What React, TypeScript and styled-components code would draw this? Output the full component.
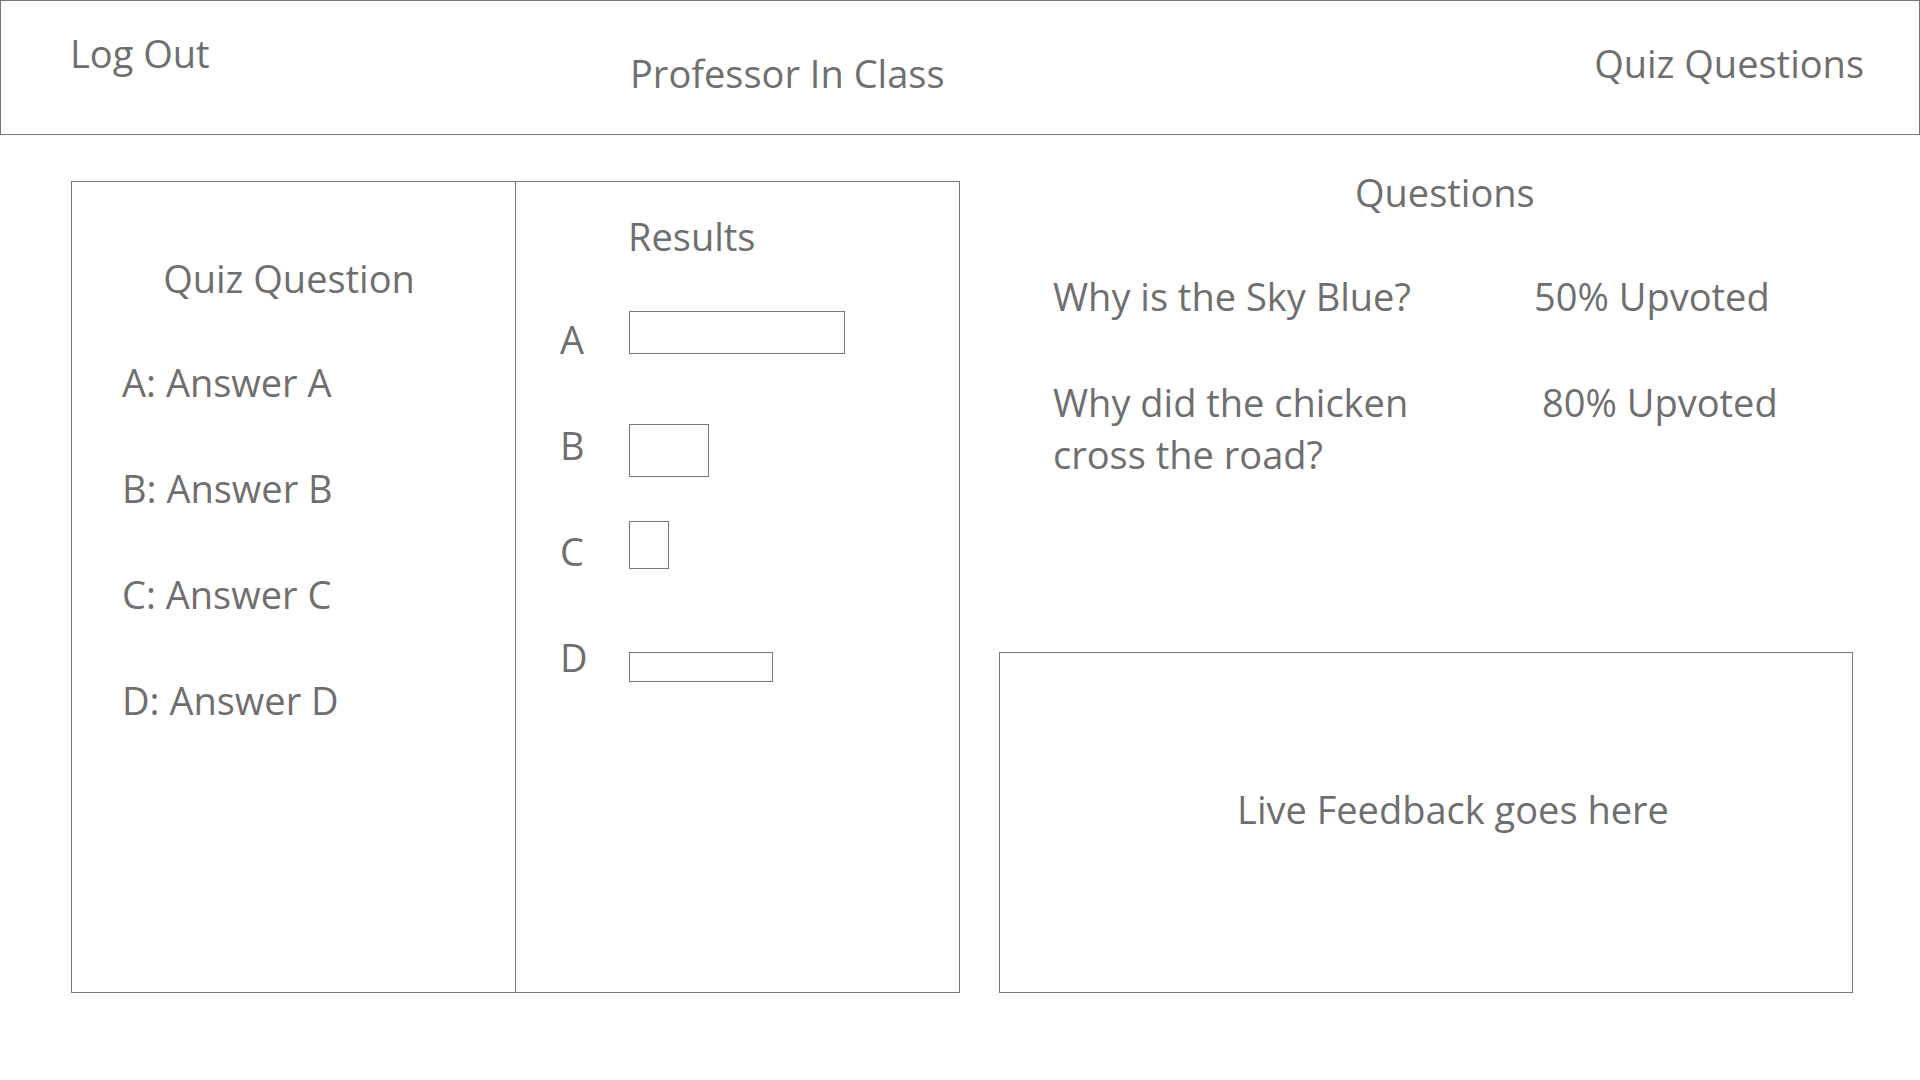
import React from "react";
import styled, { createGlobalStyle } from "styled-components";

const GlobalStyle = createGlobalStyle`
  html, body {
    margin: 0;
    padding: 0;
    background: #ffffff;
  }
  body {
    width: 1920px;
    height: 1080px;
    overflow: hidden;
    font-family: "Open Sans", "Noto Sans", "Liberation Sans", sans-serif;
    color: #6f6f6f;
  }
  * { box-sizing: border-box; }
`;

const INK = "#6f6f6f";
const LINE = "#777777";

const Page = styled.div`
  width: 1920px;
  height: 1080px;
  display: flex;
  flex-direction: column;
`;

const Label = styled.div<{ $top?: number; $left?: number }>`
  font-family: "Open Sans", "Noto Sans", "Liberation Sans", sans-serif;
  font-size: 38px;
  font-weight: 400;
  line-height: 52px;
  color: ${INK};
  white-space: nowrap;
  margin-top: ${(p) => p.$top ?? 0}px;
  padding-left: ${(p) => p.$left ?? 0}px;
`;

/* ---------- Header ---------- */

const Header = styled.header`
  height: 135px;
  width: 1920px;
  border: 1px solid ${LINE};
  display: grid;
  grid-template-columns: 560px 1fr auto;
  align-items: start;
  padding: 0 55px 0 69px;
`;

/* ---------- Main ---------- */

const Main = styled.main`
  display: flex;
  align-items: stretch;
  gap: 39px;
  padding-left: 71px;
`;

const QuizPanel = styled.section`
  margin-top: 46px;
  width: 889px;
  height: 812px;
  border: 1px solid ${LINE};
  display: grid;
  grid-template-columns: 444px 443px;
`;

const QuestionColumn = styled.div`
  border-right: 1px solid ${LINE};
  display: flex;
  flex-direction: column;
`;

const PanelTitle = styled.div`
  margin-top: 70px;
  padding-right: 9px;
  text-align: center;
  font-size: 38px;
  line-height: 52px;
  color: ${INK};
`;

const AnswerList = styled.ul`
  list-style: none;
  margin: 52px 0 0 0;
  padding: 0 0 0 50px;
  display: flex;
  flex-direction: column;
  gap: 54px;
`;

const Answer = styled.li`
  font-size: 38px;
  line-height: 52px;
  color: ${INK};
  white-space: nowrap;
`;

const ResultsColumn = styled.div`
  padding-top: 28px;
  display: flex;
  flex-direction: column;
`;

const ResultList = styled.div`
  margin-top: 42px;
  display: grid;
  grid-auto-rows: 106px;
`;

const ResultRow = styled.div`
  display: grid;
  grid-template-columns: 69px auto;
  align-items: start;
  padding-left: 44px;
`;

const ResultLetter = styled.span`
  margin-top: 9px;
  font-size: 38px;
  line-height: 52px;
  color: ${INK};
`;

const Bar = styled.div<{ $w: number; $h: number; $offset: number }>`
  width: ${(p) => p.$w}px;
  height: ${(p) => p.$h}px;
  margin-top: ${(p) => p.$offset}px;
  border: 1px solid ${LINE};
  background: #ffffff;
`;

/* ---------- Right side ---------- */

const SideColumn = styled.section`
  width: 854px;
  display: flex;
  flex-direction: column;
`;

const QuestionTable = styled.div`
  margin-top: 52px;
  padding-left: 54px;
  display: grid;
  grid-template-columns: 410px auto;
  column-gap: 71px;
  row-gap: 54px;
  align-items: start;
`;

const StudentQuestion = styled.div`
  font-size: 38px;
  line-height: 52px;
  color: ${INK};
`;

const Votes = styled.div<{ $indent?: number }>`
  font-size: 38px;
  line-height: 52px;
  color: ${INK};
  white-space: nowrap;
  padding-left: ${(p) => p.$indent ?? 0}px;
`;

const FeedbackBox = styled.div`
  margin-top: auto;
  height: 341px;
  border: 1px solid ${LINE};
  display: flex;
  align-items: center;
  justify-content: center;
  padding: 0 0 28px 54px;
`;

const answers = ["A: Answer A", "B: Answer B", "C: Answer C", "D: Answer D"];

const results = [
  { letter: "A", w: 216, h: 43, offset: 7 },
  { letter: "B", w: 80, h: 53, offset: 14 },
  { letter: "C", w: 40, h: 48, offset: 5 },
  { letter: "D", w: 144, h: 30, offset: 30 },
];

const studentQuestions = [
  { text: "Why is the Sky Blue?", votes: "50% Upvoted", indent: 0 },
  { text: "Why did the chicken cross the road?", votes: "80% Upvoted", indent: 8 },
];

export default function App() {
  return (
    <>
      <GlobalStyle />
      <Page>
        <Header>
          <Label $top={26}>Log Out</Label>
          <Label $top={46}>Professor In Class</Label>
          <Label $top={36}>Quiz Questions</Label>
        </Header>
        <Main>
          <QuizPanel>
            <QuestionColumn>
              <PanelTitle>Quiz Question</PanelTitle>
              <AnswerList>
                {answers.map((a) => (
                  <Answer key={a}>{a}</Answer>
                ))}
              </AnswerList>
            </QuestionColumn>
            <ResultsColumn>
              <Label $left={112}>Results</Label>
              <ResultList>
                {results.map((r) => (
                  <ResultRow key={r.letter}>
                    <ResultLetter>{r.letter}</ResultLetter>
                    <Bar $w={r.w} $h={r.h} $offset={r.offset} />
                  </ResultRow>
                ))}
              </ResultList>
            </ResultsColumn>
          </QuizPanel>
          <SideColumn>
            <Label $top={31} $left={356}>Questions</Label>
            <QuestionTable>
              {studentQuestions.map((q) => (
                <React.Fragment key={q.text}>
                  <StudentQuestion>{q.text}</StudentQuestion>
                  <Votes $indent={q.indent}>{q.votes}</Votes>
                </React.Fragment>
              ))}
            </QuestionTable>
            <FeedbackBox>
              <Label>Live Feedback goes here</Label>
            </FeedbackBox>
          </SideColumn>
        </Main>
      </Page>
    </>
  );
}
